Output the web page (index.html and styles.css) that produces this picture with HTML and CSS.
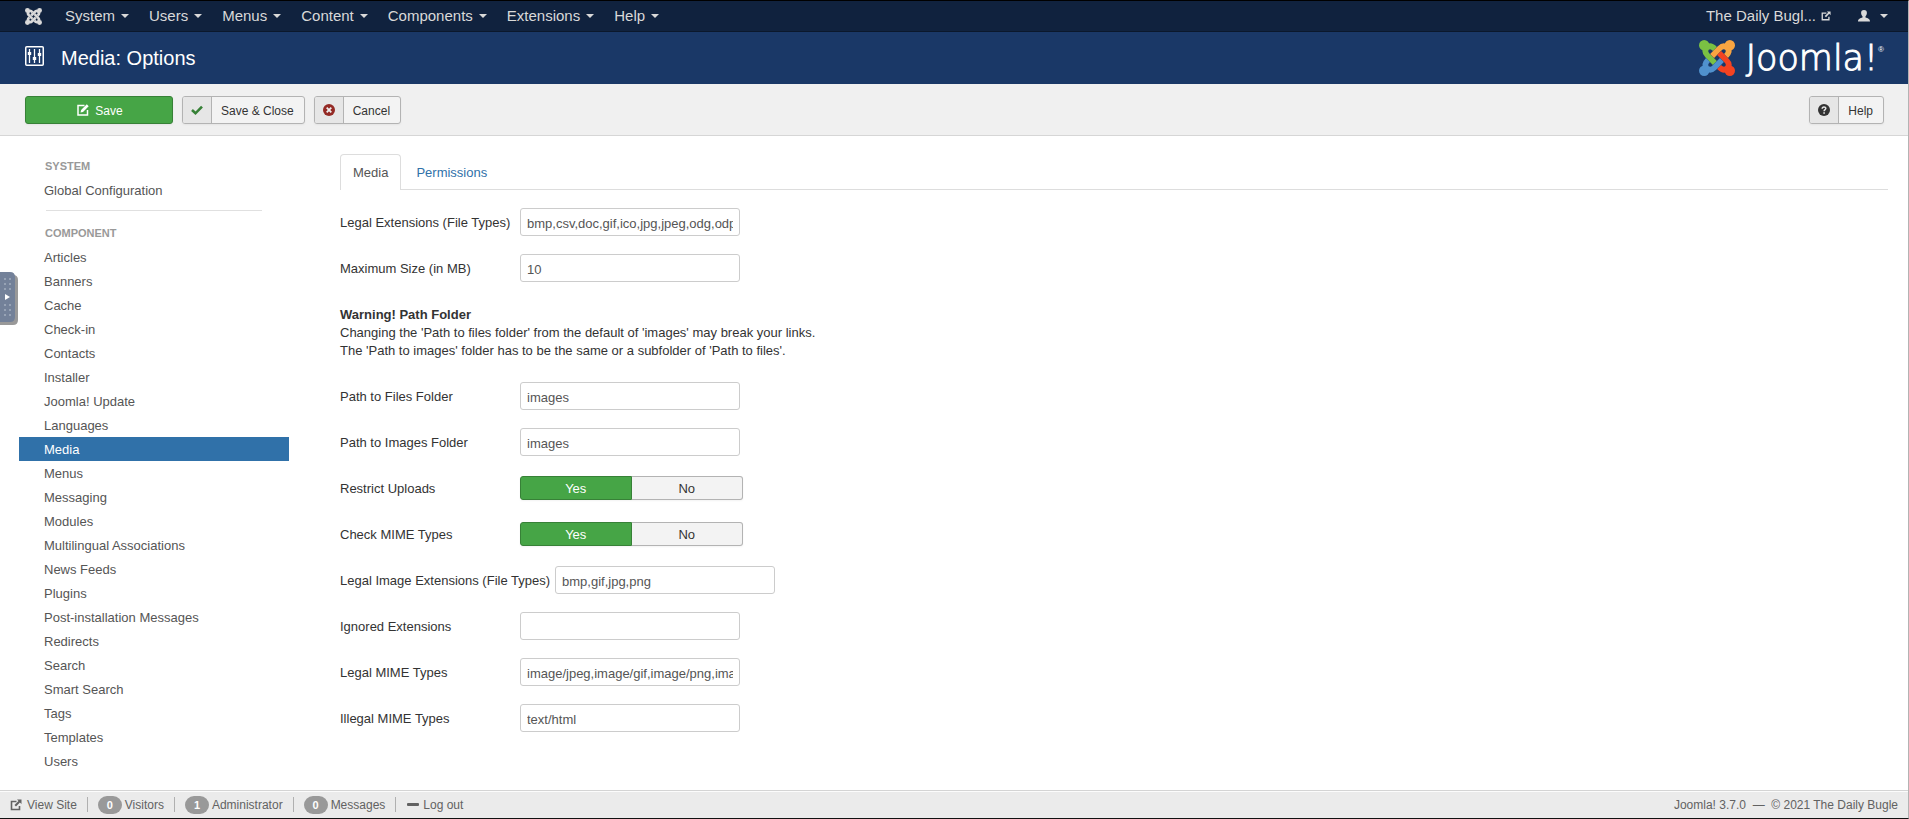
FILE: index.html
```html
<!DOCTYPE html>
<html lang="en">
<head>
<meta charset="utf-8">
<title>Media: Options</title>
<link rel="stylesheet" href="styles.css">
</head>
<body>
<svg class="sprite" aria-hidden="true">
  <symbol id="link-arm" viewBox="0 0 36 36"><circle cx="5.2" cy="5.2" r="5.2" fill="currentColor"/><path d="M16 9C13 6 10.500 5.300 8 7.600C5.300 10.300 5.800 12.800 8.500 15.500L15.900 22.900" fill="none" stroke="currentColor" stroke-width="5.600"/></symbol>
  <symbol id="external" viewBox="0 0 12 12"><path d="M6.500 2.500H1.500V10.500H9.500V7" fill="none" stroke="currentColor" stroke-width="1.600"/><path d="M7 0.500H11.500V5L9.900 3.400L6 7.500L4.500 6L8.500 2Z" fill="currentColor"/></symbol>
  <symbol id="edit" viewBox="0 0 12 12"><path d="M7.500 1.500H1V11H10.500V6" fill="none" stroke="currentColor" stroke-width="1.500"/><path d="M9.800 0.300L11.700 2.200L6 8L3.500 8.600L4.100 6Z" fill="currentColor"/></symbol>
</svg>
<div class="app">
  <nav class="navbar" aria-label="Main">
    <a class="brand" href="#" aria-label="Control panel">
      <svg width="17" height="17" viewBox="0 0 36 36"><use href="#link-arm" width="36" height="36"/><use href="#link-arm" width="36" height="36" transform="rotate(90 18 18)"/><use href="#link-arm" width="36" height="36" transform="rotate(180 18 18)"/><use href="#link-arm" width="36" height="36" transform="rotate(270 18 18)"/></svg>
    </a>
    <a class="menu" href="#">System<span class="caret"></span></a>
    <a class="menu" href="#">Users<span class="caret"></span></a>
    <a class="menu" href="#">Menus<span class="caret"></span></a>
    <a class="menu" href="#">Content<span class="caret"></span></a>
    <a class="menu" href="#">Components<span class="caret"></span></a>
    <a class="menu" href="#">Extensions<span class="caret"></span></a>
    <a class="menu" href="#">Help<span class="caret"></span></a>
    <a class="menu site" href="#">The Daily Bugl...<svg width="10" height="10"><use href="#external" width="10" height="10"/></svg></a>
    <a class="menu user" href="#" aria-label="User menu"><svg width="12" height="12" viewBox="0 0 12 12"><path d="M6 0C8 0 9 1.300 8.900 3C8.800 4.700 8.100 5.700 7.500 6.300V7.600C9.500 8.200 12 8.900 12 11.500H0C0 8.900 2.500 8.200 4.500 7.600V6.300C3.900 5.700 3.200 4.700 3.100 3C3 1.300 4 0 6 0Z" fill="currentColor"/></svg><span class="caret"></span></a>
  </nav>

  <header class="header">
    <svg width="19" height="20" viewBox="0 0 19 20" fill="none" stroke="currentColor"><rect x="0.750" y="0.750" width="17.500" height="18.500" rx="1" stroke-width="1.500"/><path d="M4.500 3V17M9.500 3V17M14.500 3V17" stroke-width="1.300"/><path d="M2.800 7.500H6.200M7.800 12.500H11.200M12.800 8.500H16.200" stroke-width="3"/></svg>
    <h1 class="title">Media: Options</h1>
    <div class="logo">
      <svg width="36" height="36" viewBox="0 0 36 36" aria-hidden="true"><g class="green"><use href="#link-arm" width="36" height="36"/></g><g class="orange" transform="rotate(90 18 18)"><use href="#link-arm" width="36" height="36"/></g><g class="red" transform="rotate(180 18 18)"><use href="#link-arm" width="36" height="36"/></g><g class="blue" transform="rotate(270 18 18)"><use href="#link-arm" width="36" height="36"/></g></svg>
      <span class="wordmark">Joomla!</span><span class="registered">®</span>
    </div>
  </header>

  <div class="toolbar">
    <button class="btn save" type="button"><svg width="12" height="12"><use href="#edit" width="12" height="12"/></svg><span class="save-text">Save</span></button>
    <button class="btn" type="button"><span class="btn-icon"><svg width="12" height="12" viewBox="0 0 12 12"><path d="M1 6L4.500 9.300L11 2.700" fill="none" stroke="#378137" stroke-width="2.600"/></svg></span><span class="btn-text">Save &amp; Close</span></button>
    <button class="btn" type="button"><span class="btn-icon"><svg width="12" height="12" viewBox="0 0 12 12"><circle cx="6" cy="6" r="6" fill="#942a25"/><path d="M3.700 3.700L8.300 8.300M8.300 3.700L3.700 8.300" stroke="#eee" stroke-width="1.800"/></svg></span><span class="btn-text">Cancel</span></button>
    <button class="btn help" type="button"><span class="btn-icon"><svg width="12" height="12" viewBox="0 0 12 12"><circle cx="6" cy="6" r="6" fill="#333"/><path d="M4.200 4.700C4.200 2.400 7.900 2.500 7.800 4.500C7.700 5.700 6.100 5.600 6.100 7.300" fill="none" stroke="#e6e6e6" stroke-width="1.500"/><path d="M5.300 8.200H6.900V9.700H5.300Z" fill="#e6e6e6"/></svg></span><span class="btn-text">Help</span></button>
  </div>

  <div class="body">
    <button class="drawer" type="button" aria-label="Show debug panel"><svg width="18" height="53" viewBox="0 0 18 53"><path d="M0 3H13Q18 3 18 8V48Q18 53 13 53H0Z" fill="#999"/><path d="M0 0H10Q15 0 15 5V45Q15 50 10 50H0Z" fill="#738199"/><path d="M4 7H11M4 12H11M4 17H11M4 33H11M4 38H11M4 43H11" stroke="#97a3b5" stroke-width="2" stroke-dasharray="2 3"/><path d="M5 22L10 25L5 28Z" fill="#fff"/></svg></button>
    <nav class="sidebar" aria-label="Components">
      <h2 class="side-head">SYSTEM</h2>
      <a class="side-link" href="#">Global Configuration</a>
      <hr class="side-rule">
      <h2 class="side-head">COMPONENT</h2>
      <a class="side-link" href="#">Articles</a>
      <a class="side-link" href="#">Banners</a>
      <a class="side-link" href="#">Cache</a>
      <a class="side-link" href="#">Check-in</a>
      <a class="side-link" href="#">Contacts</a>
      <a class="side-link" href="#">Installer</a>
      <a class="side-link" href="#">Joomla! Update</a>
      <a class="side-link" href="#">Languages</a>
      <a class="side-link active" href="#">Media</a>
      <a class="side-link" href="#">Menus</a>
      <a class="side-link" href="#">Messaging</a>
      <a class="side-link" href="#">Modules</a>
      <a class="side-link" href="#">Multilingual Associations</a>
      <a class="side-link" href="#">News Feeds</a>
      <a class="side-link" href="#">Plugins</a>
      <a class="side-link" href="#">Post-installation Messages</a>
      <a class="side-link" href="#">Redirects</a>
      <a class="side-link" href="#">Search</a>
      <a class="side-link" href="#">Smart Search</a>
      <a class="side-link" href="#">Tags</a>
      <a class="side-link" href="#">Templates</a>
      <a class="side-link" href="#">Users</a>
    </nav>

    <main class="content">
      <div class="tabs">
        <a class="tab current" href="#">Media</a>
        <a class="tab" href="#">Permissions</a>
      </div>
      <form class="form">
        <div class="row"><label class="label" for="ext">Legal Extensions (File Types)</label><input class="field" id="ext" type="text" value="bmp,csv,doc,gif,ico,jpg,jpeg,odg,odp,ods,odt,pdf,png,ppt,txt,xcf,xls"></div>
        <div class="row"><label class="label" for="size">Maximum Size (in MB)</label><input class="field" id="size" type="text" value="10"></div>
        <div class="note"><strong>Warning! Path Folder</strong><br>Changing the 'Path to files folder' from the default of 'images' may break your links.<br>The 'Path to images' folder has to be the same or a subfolder of 'Path to files'.</div>
        <div class="row"><label class="label" for="files">Path to Files Folder</label><input class="field" id="files" type="text" value="images"></div>
        <div class="row"><label class="label" for="images">Path to Images Folder</label><input class="field" id="images" type="text" value="images"></div>
        <div class="row" role="radiogroup" aria-labelledby="restrict"><span class="label" id="restrict">Restrict Uploads</span><span class="switch"><label class="option"><input class="radio" type="radio" name="restrict" checked><span class="option-text">Yes</span></label><label class="option"><input class="radio" type="radio" name="restrict"><span class="option-text">No</span></label></span></div>
        <div class="row" role="radiogroup" aria-labelledby="mime"><span class="label" id="mime">Check MIME Types</span><span class="switch"><label class="option"><input class="radio" type="radio" name="mime" checked><span class="option-text">Yes</span></label><label class="option"><input class="radio" type="radio" name="mime"><span class="option-text">No</span></label></span></div>
        <div class="row"><label class="label" for="imgext">Legal Image Extensions (File Types)</label><input class="field" id="imgext" type="text" value="bmp,gif,jpg,png"></div>
        <div class="row"><label class="label" for="ignored">Ignored Extensions</label><input class="field" id="ignored" type="text" value=""></div>
        <div class="row"><label class="label" for="legal">Legal MIME Types</label><input class="field" id="legal" type="text" value="image/jpeg,image/gif,image/png,image/bmp,application/x-shockwave-flash"></div>
        <div class="row"><label class="label" for="illegal">Illegal MIME Types</label><input class="field" id="illegal" type="text" value="text/html"></div>
      </form>
    </main>
  </div>

  <footer class="status">
    <a class="stat view" href="#"><svg width="12" height="12"><use href="#external" width="12" height="12"/></svg>View Site</a>
    <span class="stat"><span class="badge">0</span>Visitors</span>
    <span class="stat"><span class="badge">1</span>Administrator</span>
    <a class="stat" href="#"><span class="badge">0</span>Messages</a>
    <a class="stat logout" href="#"><svg width="12" height="12" viewBox="0 0 12 12"><rect y="4" width="12" height="3" rx="1" fill="currentColor"/></svg>Log out</a>
    <span class="version">Joomla! 3.7.0 &nbsp;—&nbsp; © 2021 The Daily Bugle</span>
  </footer>
</div>
</body>
</html>
```
FILE: styles.css
```css
* { box-sizing: border-box; }

body {
  margin: 0;
  background: #fff;
  color: #333;
  font: 13px/18px "Liberation Sans", Arial, sans-serif;
}

a { color: inherit; text-decoration: none; }
svg { display: block; flex: none; }
.sprite { position: absolute; width: 0; height: 0; }

.app {
  display: flex;
  flex-direction: column;
  min-height: 100vh;
  border-top: 1px solid #000;
  border-right: 1px solid #b3b3b3;
  border-bottom: 1px solid #111;
}

/* Top menu */
.navbar {
  display: flex;
  align-items: center;
  height: 31px;
  padding: 0 14px 0 25px;
  background: #10223e;
  border-bottom: 1px solid #0b182c;
  color: #d9d9d9;
  font-size: 15px;
  line-height: 24px;
}
.brand { margin-right: 13px; }
.menu { display: flex; align-items: center; padding: 0 10px; gap: 6px; }
.caret {
  border: 4px solid transparent;
  border-top-color: currentColor;
  border-bottom: 0;
}
.site { margin-left: auto; gap: 5px; }
.user { gap: 10px; padding: 0 6px 0 17px; }

/* Title bar */
.header {
  display: flex;
  align-items: center;
  height: 52px;
  padding: 0 24px 0 25px;
  background: #1a3867;
  color: #fff;
}
.title { margin: 0 0 0 17px; font-size: 20px; font-weight: normal; line-height: 24px; }
.header > svg { margin-bottom: 4px; }
.logo { display: flex; align-items: center; margin-left: auto; height: 36px; }
.wordmark {
  margin-left: 11px;
  font: 200 35px/36px "DejaVu Sans", "DejaVu Sans Light", sans-serif;
  -webkit-text-stroke: 1px currentColor;
}
.registered { align-self: flex-start; font-size: 8px; line-height: 20px; }
.green { color: #7ac143; }
.orange { color: #f9a541; }
.red { color: #f44321; }
.blue { color: #5091cd; }

/* Action buttons */
.toolbar {
  display: flex;
  gap: 9px;
  padding: 12px 24px 11px 25px;
  background: #f0f0f0;
  border-bottom: 1px solid #d6d6d6;
}
.btn {
  display: flex;
  height: 28px;
  padding: 0;
  overflow: hidden;
  border: 1px solid #b3b3b3;
  border-radius: 3px;
  background: #f3f3f3;
  box-shadow: 0 1px 2px rgba(0, 0, 0, 0.05);
  color: #333;
  font: 12px/24px "Liberation Sans", Arial, sans-serif;
}
.btn-icon {
  display: flex;
  align-items: center;
  justify-content: center;
  width: 29px;
  height: 26px;
  background: #e6e6e6;
  border-right: 1px solid #b3b3b3;
}
.btn-text { padding: 2px 10px 0 9px; }
.save-text { padding-top: 2px; }
.save {
  align-items: center;
  justify-content: center;
  gap: 6px;
  width: 148px;
  padding-left: 2px;
  border-color: #378137;
  background: #46a546;
  color: #fff;
}
.help { margin-left: auto; }

/* Body */
.body { position: relative; display: flex; flex: 1; gap: 51px; padding: 18px 20px 17px 19px; }
.drawer { position: absolute; left: 0; top: 136px; padding: 0; border: 0; background: none; }
.sidebar { width: 270px; flex: none; }
.side-head { margin: 0; padding-left: 26px; color: #999; font-size: 11px; line-height: 24px; }
.side-link { display: block; padding: 4px 0 2px 25px; color: #555; }
.side-link.active { background: #3071a9; color: #fff; }
.side-rule { margin: 8px 27px 10px; border: 0; border-top: 1px solid #e0e0e0; }

.content { flex: 1; min-width: 0; }
.tabs { display: flex; gap: 2px; border-bottom: 1px solid #ddd; }
.tab {
  margin-bottom: -1px;
  padding: 9px 12px 8px;
  border: 1px solid transparent;
  border-bottom: 0;
  border-radius: 4px 4px 0 0;
  color: #3071a9;
}
.tab.current { border-color: #ddd; background: #fff; color: #555; }

.form { display: flex; flex-direction: column; gap: 18px; padding-top: 18px; }
.row { display: flex; align-items: center; gap: 5px; height: 28px; }
.label { min-width: 175px; padding-top: 2px; }
.field {
  width: 220px;
  height: 28px;
  padding: 5px 6px 3px;
  border: 1px solid #ccc;
  border-radius: 3px;
  background: #fff;
  color: #555;
  font: 13px/18px "Liberation Sans", Arial, sans-serif;
}
.note { padding: 6px 0 4px; }

.switch { display: flex; width: 223px; border-radius: 3px; box-shadow: 0 1px 2px rgba(0, 0, 0, 0.05); }
.option { position: relative; flex: 1; }
.radio { position: absolute; inset: 0; margin: 0; opacity: 0; }
.option-text {
  display: block;
  padding-top: 2px;
  border: 1px solid #b3b3b3;
  background: #f3f3f3;
  line-height: 20px;
  text-align: center;
}
.option:first-child .option-text { border-radius: 3px 0 0 3px; }
.option:last-child .option-text { border-left: 0; border-radius: 0 3px 3px 0; }
.radio:checked + .option-text { border-color: #378137; background: #46a546; color: #fff; }

/* Status bar */
.status {
  display: flex;
  align-items: center;
  height: 28px;
  padding: 0 10px;
  border-top: 1px solid #d4d4d4;
  background: #ebebeb;
  box-shadow: inset 0 1px 0 #fcfcfc;
  color: #626262;
  font-size: 12px;
}
.stat { display: flex; align-items: center; gap: 3px; }
.stat + .stat::before {
  content: "";
  width: 1px;
  height: 15px;
  margin: 0 7px 0 10px;
  background: #b0b0b0;
}
.view { gap: 5px; }
.logout { gap: 4px; }
.badge {
  width: 24px;
  border-radius: 9px;
  background: #999;
  color: #fff;
  font-size: 11px;
  font-weight: bold;
  text-align: center;
}
.version { margin-left: auto; }
```
